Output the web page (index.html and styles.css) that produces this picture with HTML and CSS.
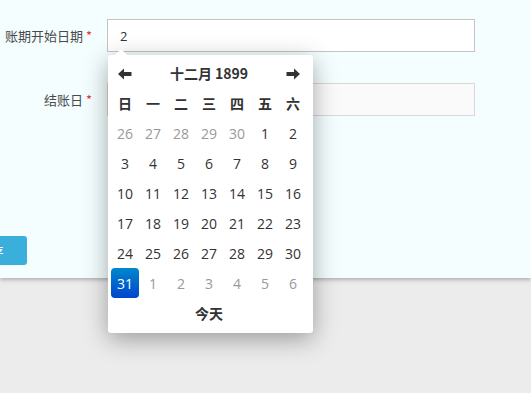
FILE: index.html
```html
<!DOCTYPE html>
<html lang="zh">
<head>
<meta charset="utf-8">
<link rel="stylesheet" href="styles.css">
</head>
<body>
<div class="panel">
  <div class="form-row">
    <label class="label">账期开始日期 <span class="req">*</span></label>
    <div class="input active">2</div>
  </div>
  <div class="form-row second">
    <label class="label">结账日 <span class="req">*</span></label>
    <div class="input disabled"></div>
  </div>
  <div class="actions">
    <button class="btn">保存</button>
  </div>
</div>

<div class="datepicker">
  <div class="caret"></div>
  <table class="cal">
    <thead>
      <tr class="head">
        <th class="nav"><svg width="14" height="12" viewBox="0 0 14 12"><path d="M0 6 L6 0.5 L6 4 L13.5 4 L13.5 8 L6 8 L6 11.5 Z" fill="#333"/></svg></th>
        <th colspan="5" class="title">十二月 1899</th>
        <th class="nav"><svg width="14" height="12" viewBox="0 0 14 12"><path d="M14 6 L8 0.5 L8 4 L0.5 4 L0.5 8 L8 8 L8 11.5 Z" fill="#333"/></svg></th>
      </tr>
      <tr class="dow">
        <th>日</th><th>一</th><th>二</th><th>三</th><th>四</th><th>五</th><th>六</th>
      </tr>
    </thead>
    <tbody>
      <tr><td class="old">26</td><td class="old">27</td><td class="old">28</td><td class="old">29</td><td class="old">30</td><td>1</td><td>2</td></tr>
      <tr><td>3</td><td>4</td><td>5</td><td>6</td><td>7</td><td>8</td><td>9</td></tr>
      <tr><td>10</td><td>11</td><td>12</td><td>13</td><td>14</td><td>15</td><td>16</td></tr>
      <tr><td>17</td><td>18</td><td>19</td><td>20</td><td>21</td><td>22</td><td>23</td></tr>
      <tr><td>24</td><td>25</td><td>26</td><td>27</td><td>28</td><td>29</td><td>30</td></tr>
      <tr><td class="active">31</td><td class="old">1</td><td class="old">2</td><td class="old">3</td><td class="old">4</td><td class="old">5</td><td class="old">6</td></tr>
    </tbody>
    <tfoot>
      <tr><th colspan="7" class="today">今天</th></tr>
    </tfoot>
  </table>
</div>
</body>
</html>
```

FILE: styles.css
```css
html, body {
  margin: 0;
  padding: 0;
}
body {
  background: #ececec;
  font-family: "Open Sans", "Noto Sans CJK SC", sans-serif;
  color: #333;
  width: 531px;
  height: 393px;
  overflow: hidden;
  position: relative;
}
.panel {
  background: #f4feff;
  height: 278px;
  box-sizing: border-box;
  padding-top: 19px;
  box-shadow: 0 2px 4px rgba(0, 0, 0, 0.25);
  position: relative;
}
.form-row {
  display: flex;
  align-items: center;
  gap: 15px;
}
.form-row.second {
  margin-top: 31px;
}
.label {
  width: 92px;
  text-align: right;
  font-family: "Noto Sans CJK SC", sans-serif;
  font-size: 13px;
  color: #4a4a4a;
  white-space: nowrap;
}
.req {
  color: #e33;
}
.input {
  width: 368px;
  height: 33px;
  box-sizing: border-box;
  border: 1px solid #c4c4c4;
  background: #fff;
  padding-left: 12px;
  font-size: 13px;
  line-height: 33px;
  color: #333;
}
.input.disabled {
  background: #fafafa;
  border-color: #d8d8d8;
}
.actions {
  margin-top: 120px;
}
.btn {
  margin-left: -46px;
  width: 73px;
  height: 29px;
  border: none;
  border-radius: 3px;
  background: #3aafdb;
  color: #fff;
  font-family: "Noto Sans CJK SC", sans-serif;
  font-size: 13px;
  padding: 0;
}
.datepicker {
  position: absolute;
  left: 108px;
  top: 55px;
  width: 205px;
  height: 278px;
  box-sizing: border-box;
  background: #fff;
  border-radius: 3px;
  padding: 3px 6px 4px 3px;
  box-shadow: 0 6px 24px rgba(0, 0, 0, 0.35);
}
.caret {
  position: absolute;
  left: 7px;
  top: -6px;
  width: 0;
  height: 0;
  border-left: 6px solid transparent;
  border-right: 6px solid transparent;
  border-bottom: 6px solid #fff;
}
.cal {
  border-collapse: collapse;
  border-spacing: 0;
  font-size: 14px;
}
.cal th, .cal td {
  width: 28px;
  height: 30px;
  padding: 0;
  text-align: center;
  vertical-align: middle;
  box-sizing: border-box;
}
.cal th {
  font-weight: bold;
  font-family: "Noto Sans CJK SC", sans-serif;
}
.cal .title {
  font-family: "Noto Sans CJK SC", sans-serif;
  font-size: 14px;
}
.cal .nav svg {
  display: block;
  margin: 1px auto 0;
}
.cal td {
  color: #333;
}
.cal td.old {
  color: #999;
}
.cal td.active {
  color: #fff;
  background: linear-gradient(to bottom, #0088cc, #0044cc);
  border-radius: 4px;
}
.cal .today {
  font-size: 14px;
}
```
